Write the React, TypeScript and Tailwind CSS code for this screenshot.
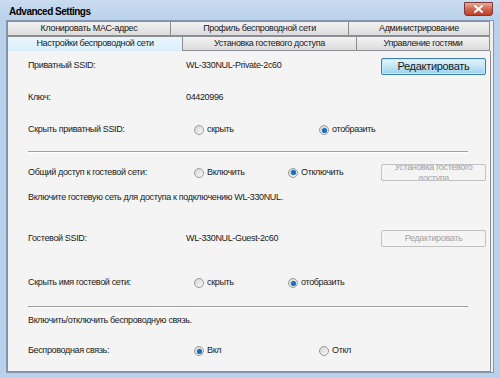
import React from "react";

const font = "font-['Liberation_Sans',Arial,sans-serif]";

const topTabs = [
  { label: "Клонировать MAC-адрес", w: "w-[163px]" },
  { label: "Профиль беспроводной сети", w: "w-[178px]" },
  { label: "Администрирование", w: "w-[142px]" },
];

const bottomTabs = [
  { label: "Настройки беспроводной сети", w: "w-[175px]", active: true },
  { label: "Установка гостевого доступа", w: "w-[174px]" },
  { label: "Управление гостями", w: "w-[134px]" },
];

function Radio({ label, checked }: { label: string; checked?: boolean }) {
  return (
    <span className="flex items-center gap-[3px]">
      <span className="relative flex h-[10px] w-[10px] items-center justify-center rounded-full border border-[#9a9a9a] bg-gradient-to-br from-[#d4d4d4] to-[#fafafa]">
        {checked && (
          <span className="h-[5px] w-[5px] rounded-full bg-[#1d6eb8] shadow-[0_0_1px_#5aa8e8]" />
        )}
      </span>
      <span>{label}</span>
    </span>
  );
}

function Button({ children, disabled }: { children: React.ReactNode; disabled?: boolean }) {
  return disabled ? (
    <div className="ml-auto mr-[4px] flex h-[17px] w-[105px] items-center justify-center overflow-hidden rounded-[2px] border border-[#c2c2c2] bg-[#f4f4f4] text-center leading-[11px] text-[#a3a3a3]">
      <span className="block w-[90px]">{children}</span>
    </div>
  ) : (
    <div className="ml-auto mr-[4px] flex h-[17px] w-[105px] items-center justify-center rounded-[2px] border border-[#3c7fb1] bg-gradient-to-b from-[#e5f4fc] via-[#c4e5f6] to-[#98d1ef] text-[11px] tracking-[-0.3px] shadow-[inset_0_0_0_1px_#c2eafd]">
      {children}
    </div>
  );
}

function Sep({ mt }: { mt: string }) {
  return <div className={`${mt} mr-[22px] h-[2px] border-t border-[#a0a0a0] border-b border-b-white`} />;
}

export default function App() {
  return (
    <div className={`${font} flex h-[378px] w-[500px] flex-col bg-[#b9d1ea] text-[9px] tracking-[-0.35px] text-[#1a1a1a]`}>
      {/* Title bar */}
      <div className="flex h-[20px] items-start justify-between bg-gradient-to-b from-[#c9dcf0] to-[#b9d1ea] pl-[9px] pr-[7px]">
        <span className="mt-[4px] text-[10px] font-bold tracking-[-0.5px] text-black">Advanced Settings</span>
        <div className="mt-[2px] flex h-[14px] w-[29px] items-center justify-center rounded-b-[3px] border border-[#7b3a3a] bg-gradient-to-b from-[#e9a99a] via-[#d0664f] to-[#c43c26]">
          <svg width="9" height="8" viewBox="0 0 9 8">
            <path d="M1 1L8 7M8 1L1 7" stroke="#fff" strokeWidth="2" strokeLinecap="square" />
          </svg>
        </div>
      </div>

      {/* Client area */}
      <div className="mx-[6px] mb-[5px] flex flex-1 flex-col border border-[#8797ad] bg-[#f0f0f0]">
        {/* Tabs */}
        <div className="flex h-[15px]">
          {topTabs.map((t) => (
            <div
              key={t.label}
              className={`${t.w} flex items-center justify-center border border-r-0 border-[#8c8e94] bg-gradient-to-b from-[#f2f2f2] to-[#dcdcdc] last:border-r`}
            >
              {t.label}
            </div>
          ))}
        </div>
        <div className="flex h-[15px]">
          {bottomTabs.map((t) => (
            <div
              key={t.label}
              className={`${t.w} flex items-center justify-center border border-r-0 border-[#8c8e94] last:border-r ${
                t.active ? "border-b-0 bg-gradient-to-b from-[#eaf6fd] to-[#d9f0fc]" : "bg-gradient-to-b from-[#f2f2f2] to-[#dcdcdc]"
              }`}
            >
              {t.label}
            </div>
          ))}
        </div>

        {/* Panel */}
        <div className="mr-[2px] flex flex-1 flex-col border border-t-0 border-[#8c8e94] bg-[#f4f4f4] pl-[20px] pt-[7px]">
          <div className="flex h-[16px] items-center">
            <span className="w-[158px]">Приватный SSID:</span>
            <span>WL-330NUL-Private-2c60</span>
            <Button>Редактировать</Button>
          </div>

          <div className="mt-[16px] flex h-[16px] items-center">
            <span className="w-[158px]">Ключ:</span>
            <span>04420996</span>
          </div>

          <div className="mt-[16px] flex h-[16px] items-center">
            <span className="w-[166px]">Скрыть приватный SSID:</span>
            <span className="w-[125px]"><Radio label="скрыть" /></span>
            <Radio label="отобразить" checked />
          </div>

          <Sep mt="mt-[13px]" />

          <div className="mt-[11px] flex h-[17px] items-center">
            <span className="w-[166px]">Общий доступ к гостевой сети:</span>
            <span className="w-[94px]"><Radio label="Включить" /></span>
            <Radio label="Отключить" checked />
            <Button disabled>Установка гостевого доступа</Button>
          </div>

          <div className="mt-[9px] flex h-[16px] items-center">
            Включите гостевую сеть для доступа к подключению WL-330NUL.
          </div>

          <div className="mt-[24px] flex h-[17px] items-center">
            <span className="w-[158px]">Гостевой SSID:</span>
            <span>WL-330NUL-Guest-2c60</span>
            <Button disabled>Редактировать</Button>
          </div>

          <div className="mt-[28px] flex h-[16px] items-center">
            <span className="w-[166px]">Скрыть имя гостевой сети:</span>
            <span className="w-[94px]"><Radio label="скрыть" /></span>
            <Radio label="отобразить" checked />
          </div>

          <Sep mt="mt-[15px]" />

          <div className="mt-[5px] flex h-[16px] items-center">
            Включить/отключить беспроводную связь.
          </div>

          <div className="mt-[14px] flex h-[16px] items-center">
            <span className="w-[166px]">Беспроводная связь:</span>
            <span className="w-[125px]"><Radio label="Вкл" checked /></span>
            <Radio label="Откл" />
          </div>
        </div>
      </div>
    </div>
  );
}
